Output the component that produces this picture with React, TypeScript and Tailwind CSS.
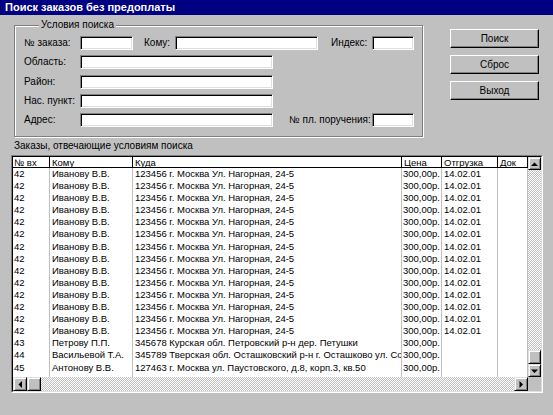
import React from "react";

type Row = { n: string; to: string; addr: string; price: string; date: string };

const rows: Row[] = [
  ...Array.from({ length: 14 }, () => ({
    n: "42",
    to: "Иванову В.В.",
    addr: "123456 г. Москва Ул. Нагорная, 24-5",
    price: "300,00р.",
    date: "14.02.01",
  })),
  { n: "43", to: "Петрову П.П.", addr: "345678 Курская обл. Петровский р-н дер. Петушки", price: "300,00р.", date: "" },
  { n: "44", to: "Васильевой Т.А.", addr: "345789 Тверская обл. Осташковский р-н г. Осташково ул. Совхозная", price: "300,00р.", date: "" },
  { n: "45", to: "Антонову В.В.", addr: "127463 г. Москва ул. Паустовского, д.8, корп.3, кв.50", price: "300,00р.", date: "" },
];

function Edit({ w }: { w: string }) {
  return (
    <div
      className={`${w} h-[14px] bg-white border border-t-[#808080] border-l-[#808080] border-b-white border-r-white shadow-[inset_1px_1px_0_#000,inset_-1px_-1px_0_#dfdfdf]`}
    />
  );
}

function Btn({ label }: { label: string }) {
  return (
    <div className="w-[89px] h-[19px] flex items-center justify-center text-[10px] leading-none bg-[#c0c0c0] border border-t-white border-l-white border-b-black border-r-black shadow-[inset_-1px_-1px_0_#808080]">
      {label}
    </div>
  );
}

function Arrow({ dir }: { dir: "up" | "down" | "left" | "right" }) {
  const pts =
    dir === "up"
      ? "0,4 7,4 3.5,0.5"
      : dir === "down"
      ? "0,0.5 7,0.5 3.5,4"
      : dir === "left"
      ? "4,0 4,7 0.5,3.5"
      : "0.5,0 0.5,7 4,3.5";
  const vert = dir === "up" || dir === "down";
  return (
    <svg width={vert ? 7 : 4} height={vert ? 4 : 7} viewBox={vert ? "0 0 7 4" : "0 0 4 7"}>
      <polygon points={pts} fill="#000" />
    </svg>
  );
}

function SBtn({ className, children }: { className: string; children?: React.ReactNode }) {
  return (
    <div
      className={`${className} flex items-center justify-center bg-[#c0c0c0] border border-t-[#dfdfdf] border-l-[#dfdfdf] border-b-black border-r-black shadow-[inset_1px_1px_0_#fff,inset_-1px_-1px_0_#808080]`}
    >
      {children}
    </div>
  );
}

const track =
  "bg-[repeating-conic-gradient(#c0c0c0_0%_25%,#ffffff_0%_50%)] bg-size-[2px_2px]";

export default function App() {
  return (
    <div className="w-[553px] h-[415px] bg-[#c0c0c0] flex flex-col overflow-hidden font-['Liberation_Sans',Arial,sans-serif] text-black">
      <div className="h-[15px] bg-[#000080] text-white font-bold text-[11px] leading-[15px] pl-[5px] shrink-0">
        Поиск заказов без предоплаты
      </div>

      <div className="flex pl-[14px] pt-[10px]">
        <div className="relative w-[409px] h-[112px] border border-[#808080] shadow-[inset_1px_1px_0_#fff,1px_1px_0_#fff] pt-[10px] pl-[9px] text-[10px] leading-[14px]">
          <span className="absolute left-[24px] top-[-7px] px-[2px] bg-[#c0c0c0] leading-[12px]">Условия поиска</span>
          <div className="flex flex-col gap-[5.25px]">
            <div className="flex items-center h-[14px]">
              <span className="w-[56px]">№ заказа:</span>
              <Edit w="w-[53px]" />
              <span className="w-[31px] ml-[11px]">Кому:</span>
              <Edit w="w-[143px]" />
              <span className="w-[41px] ml-[13px]">Индекс:</span>
              <Edit w="w-[42px]" />
            </div>
            <div className="flex items-center h-[14px]">
              <span className="w-[56px]">Область:</span>
              <Edit w="w-[193px]" />
            </div>
            <div className="flex items-center h-[14px]">
              <span className="w-[56px]">Район:</span>
              <Edit w="w-[193px]" />
            </div>
            <div className="flex items-center h-[14px]">
              <span className="w-[56px]">Нас. пункт:</span>
              <Edit w="w-[193px]" />
            </div>
            <div className="flex items-center h-[14px]">
              <span className="w-[56px]">Адрес:</span>
              <Edit w="w-[193px]" />
              <span className="w-[83px] ml-[16px]">№ пл. поручения:</span>
              <Edit w="w-[42px]" />
            </div>
          </div>
        </div>

        <div className="ml-[27px] mt-[4px] flex flex-col gap-[7px]">
          <Btn label="Поиск" />
          <Btn label="Сброс" />
          <Btn label="Выход" />
        </div>
      </div>

      <div className="pl-[14px] mt-[3px] text-[10px] leading-[12px]">Заказы, отвечающие условиям поиска</div>

      <div className="ml-[11px] mt-[3px] w-[532px] h-[238px] border border-t-[#808080] border-l-[#808080] border-b-white border-r-white">
        <div className="w-full h-full flex flex-col border border-t-black border-l-black border-b-[#dfdfdf] border-r-[#dfdfdf]">
          <div className="flex flex-1 min-h-0">
            <div className="flex-1 bg-white flex flex-col text-[9.5px] overflow-hidden">
              <div className="flex h-[11px] leading-[11px] border-b border-black shrink-0">
                <div className="w-[37px] pl-[1px] border-r border-black">№ вх</div>
                <div className="w-[83px] pl-[2px] border-r border-black">Кому</div>
                <div className="w-[269px] pl-[2px] border-r border-black">Куда</div>
                <div className="w-[40px] pl-[2px] border-r border-black">Цена</div>
                <div className="w-[56px] pl-[2px] border-r border-black">Отгрузка</div>
                <div className="w-[30px] pl-[2px] border-r border-black">Док</div>
              </div>
              {rows.map((r, i) => (
                <div key={i} className="flex h-[12.1px] leading-[12px] shrink-0 whitespace-nowrap">
                  <div className="w-[37px] pl-[1px] border-r border-[#c0c0c0] overflow-hidden">{r.n}</div>
                  <div className="w-[83px] pl-[2px] border-r border-[#c0c0c0] overflow-hidden">{r.to}</div>
                  <div className="w-[269px] pl-[2px] border-r border-[#c0c0c0] overflow-hidden">{r.addr}</div>
                  <div className="w-[40px] pl-[1px] border-r border-[#c0c0c0] overflow-hidden">{r.price}</div>
                  <div className="w-[56px] pl-[2px] border-r border-[#c0c0c0] overflow-hidden">{r.date}</div>
                  <div className="w-[30px] border-r border-[#c0c0c0]" />
                </div>
              ))}
              <div className="flex flex-1">
                <div className="w-[37px] border-r border-[#c0c0c0]" />
                <div className="w-[83px] border-r border-[#c0c0c0]" />
                <div className="w-[269px] border-r border-[#c0c0c0]" />
                <div className="w-[40px] border-r border-[#c0c0c0]" />
                <div className="w-[56px] border-r border-[#c0c0c0]" />
                <div className="w-[30px] border-r border-[#c0c0c0]" />
              </div>
            </div>
            <div className="w-[13px] flex flex-col">
              <SBtn className="h-[13px] shrink-0">
                <Arrow dir="up" />
              </SBtn>
              <div className={`flex-1 ${track}`} />
              <SBtn className="h-[14px] shrink-0" />
              <SBtn className="h-[13px] shrink-0">
                <Arrow dir="down" />
              </SBtn>
            </div>
          </div>
          <div className="h-[14px] flex shrink-0">
            <SBtn className="w-[14px] shrink-0">
              <Arrow dir="left" />
            </SBtn>
            <SBtn className="w-[14px] shrink-0" />
            <div className={`flex-1 ${track}`} />
            <SBtn className="w-[14px] shrink-0">
              <Arrow dir="right" />
            </SBtn>
            <div className="w-[13px] bg-[#c0c0c0] shrink-0" />
          </div>
        </div>
      </div>
    </div>
  );
}
